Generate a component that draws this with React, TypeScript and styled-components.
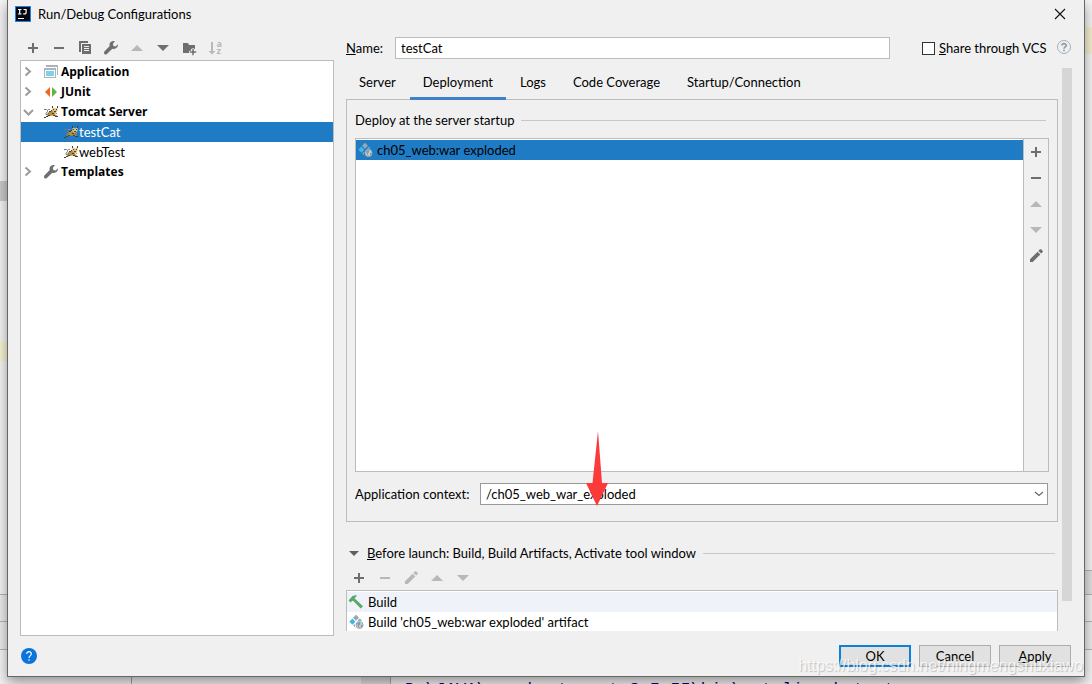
import React from 'react';
import styled, { createGlobalStyle, css } from 'styled-components';

const ink = '#6e6e6e';
const faint = '#b8b8b8';
const line = '#bcbcbc';
const blue = '#1f7bc3';

const GlobalStyle = createGlobalStyle`
  * { box-sizing: border-box; }
  body {
    margin: 0;
    background: #f0f0f0;
    color: #000;
    font: 13px/20px Lato, "Noto Sans", sans-serif;
  }
  button, input, select { font: inherit; color: inherit; }
`;

/* ---------- page behind the dialog ---------- */

const Page = styled.div`
  display: grid;
  grid-template-columns: 7px minmax(0, 1fr) 7px;
  grid-template-rows: minmax(0, 1fr) 7px;
  height: 100vh;
  min-height: 480px;
  overflow: hidden;
`;

const Strip = styled.div`
  display: flex;
  flex-direction: column;
  overflow: hidden;
`;

const Band = styled.div<{ $size?: number; $tone?: string; $ruled?: boolean }>`
  flex: ${p => (p.$size ? `0 0 ${p.$size}px` : '1')};
  background: ${p => p.$tone ?? '#f4f4f4'};
  border-top: ${p => (p.$ruled ? '1px solid #b4b4b4' : '0')};
`;

const Console = styled.div`
  grid-column: 1 / -1;
  display: flex;
  overflow: hidden;
  background: #f2f2f2;
`;

const ConsoleTree = styled.div`
  flex: 0 0 391px;
  display: flex;
  justify-content: flex-end;
  border-right: 1px solid #a8a8a8;
`;

const ConsoleTreeInner = styled.div`
  flex: 0 0 259px;
  border-left: 1px solid #a0a0a0;
  border-right: 29px solid #dedede;
`;

const ConsoleText = styled.code`
  padding: 3px 14px;
  color: #000080;
  font: 17px/20px "Liberation Mono", monospace;
  white-space: pre;
`;

/* ---------- dialog frame ---------- */

const Dialog = styled.main`
  position: relative;
  z-index: 1;
  display: flex;
  flex-direction: column;
  min-width: 0;
  background: #f0f0f0;
  border: 1px solid #666;
  border-top: 0;
  box-shadow: 0 5px 12px rgba(0, 0, 0, 0.4);
`;

const TitleBar = styled.header`
  display: flex;
  align-items: center;
  gap: 7px;
  height: 30px;
  padding: 0 16px 2px 7px;
`;

const Title = styled.h1`
  flex: 1;
  margin: 0;
  font-size: 13px;
  font-weight: 400;
`;

const IconButton = styled.button`
  display: flex;
  flex: none;
  padding: 0;
  border: 0;
  background: none;
`;

const Body = styled.div`
  flex: 1;
  display: flex;
  gap: 12px;
  min-height: 0;
  padding: 0 12px;
`;

const Footer = styled.footer`
  display: flex;
  align-items: center;
  gap: 8px;
  height: 40px;
  padding: 0 13px;
`;

const FooterSpace = styled.span`
  flex: 1;
`;

const PushButton = styled.button<{ $primary?: boolean }>`
  width: 72px;
  height: 22px;
  padding: 0;
  line-height: 18px;
  background: #e1e1e1;
  border: ${p => (p.$primary ? '2px solid #0f80d8' : '1px solid #adadad')};
`;

const Watermark = styled.div`
  position: absolute;
  right: 1px;
  bottom: 0;
  color: rgba(255, 255, 255, 0.75);
  font: 16px/20px "Liberation Sans", sans-serif;
  text-shadow: 1px 1px 1px rgba(0, 0, 0, 0.2);
  pointer-events: none;
`;

/* ---------- left column ---------- */

const Sidebar = styled.nav`
  flex: 0 0 314px;
  display: flex;
  flex-direction: column;
`;

const Toolbar = styled.div<{ $tall?: boolean }>`
  display: flex;
  gap: 10px;
  padding: ${p => (p.$tall ? '10px 5px 4px' : '7px 5px 4px')};
`;

const Tree = styled.ul`
  flex: 1;
  margin: 0;
  padding: 1px 0 0;
  list-style: none;
  background: #fff;
  border: 1px solid ${line};
`;

const TreeRow = styled.li<{ $child?: boolean; $selected?: boolean }>`
  display: flex;
  align-items: center;
  gap: 2px;
  height: 20px;
  ${p => p.$child
    ? css`padding-left: 42px; gap: 0; line-height: 18px;`
    : css`font-family: "Open Sans", sans-serif; font-size: 12px; font-weight: 700;`}
  ${p => p.$selected && css`background: ${blue}; color: #fff;`}
`;

const Twisty = styled.span`
  display: flex;
  width: 20px;
`;

/* ---------- right column ---------- */

const Settings = styled.section`
  flex: 1;
  display: flex;
  flex-direction: column;
  min-width: 0;
  padding: 7px 0 5px;
`;

const NameRow = styled.div`
  display: flex;
  align-items: center;
  height: 22px;
  margin-bottom: 9px;
`;

const FieldLabel = styled.label<{ $width: number }>`
  flex: 0 0 ${p => p.$width}px;
`;

const TextInput = styled.input`
  flex: 1;
  min-width: 0;
  height: 22px;
  padding: 0 5px;
  background: #fff;
  border: 1px solid ${line};
  outline: 0;
`;

const ShareGroup = styled.div`
  flex: 0 0 150px;
  display: flex;
  align-items: center;
  justify-content: space-between;
  margin-left: 32px;
`;

const ShareLabel = styled.label`
  display: flex;
  align-items: center;
  gap: 4px;
`;

const Checkbox = styled.input`
  appearance: none;
  width: 13px;
  height: 13px;
  margin: 0;
  background: #fff;
  border: 1px solid #333;
`;

const ScrollArea = styled.div`
  flex: 1;
  display: flex;
  gap: 4px;
  min-height: 0;
`;

const ScrollContent = styled.div`
  flex: 1;
  display: flex;
  flex-direction: column;
  min-width: 0;
`;

const ScrollThumb = styled.div`
  width: 10px;
  margin-bottom: 30px;
  background: #d6d6d6;
`;

const Tabs = styled.div`
  position: relative;
  display: flex;
  gap: 1px;
  height: 32px;
  margin-bottom: -1px;
`;

const Tab = styled.button<{ $active?: boolean }>`
  padding: 0 13px 1px;
  background: none;
  border: 0;
  border-bottom: 3px solid ${p => (p.$active ? '#4080c9' : 'transparent')};
`;

const Panel = styled.div`
  flex: 1;
  display: flex;
  flex-direction: column;
  min-height: 0;
  padding: 10px 8px 16px;
  border: 1px solid ${line};
`;

const SectionTitle = styled.h2`
  display: flex;
  align-items: center;
  gap: 7px;
  height: 20px;
  margin: 0;
  padding-right: 3px;
  font-size: 13px;
  font-weight: 400;
  &::after {
    content: "";
    flex: 1;
    border-top: 1px solid #c8c8c8;
  }
`;

const ArtifactBox = styled.div`
  flex: 1;
  display: flex;
  min-height: 0;
  margin: 8px 0 11px;
  border: 1px solid ${line};
`;

const List = styled.ul`
  flex: 1;
  margin: 0;
  padding: 1px 0 0;
  list-style: none;
  background: #fff;
`;

const ListRow = styled.li<{ $tone?: string }>`
  display: flex;
  align-items: center;
  gap: 4px;
  height: 20px;
  padding-left: 1px;
  background: ${p => p.$tone ?? '#fff'};
`;

const SideToolbar = styled.div`
  flex: 0 0 25px;
  display: flex;
  flex-direction: column;
  align-items: center;
  gap: 10px;
  padding-top: 5px;
  border-left: 1px solid ${line};
`;

const ContextRow = styled.div`
  display: flex;
  align-items: center;
  padding-right: 1px;
`;

const Combo = styled.div`
  position: relative;
  flex: 1;
  display: flex;
`;

const Select = styled.select`
  appearance: none;
  flex: 1;
  height: 22px;
  padding: 0 5px;
  background: #fff;
  border: 1px solid #999;
  border-radius: 0;
`;

const ComboChevron = styled.svg`
  position: absolute;
  top: 8px;
  right: 4px;
  pointer-events: none;
`;

const Pointer = styled.svg`
  position: absolute;
  left: 106px;
  bottom: -1px;
  pointer-events: none;
`;

const BeforeLaunch = styled.section`
  margin-top: 21px;
`;

const BeforeTitle = styled(SectionTitle)`
  &::before {
    content: "";
    margin: 0 1px 0 3px;
    border: 5px solid transparent;
    border-top-color: #5f5f5f;
    border-bottom: 0;
  }
`;

const TaskList = styled(List)`
  height: 41px;
  overflow: hidden;
  border: 1px solid ${line};
  border-bottom: 0;
`;

/* ---------- icons ---------- */

type IconName =
  | 'add' | 'remove' | 'copy' | 'wrench' | 'up' | 'down' | 'folder' | 'sort' | 'edit'
  | 'app' | 'junit' | 'tomcat' | 'artifact' | 'hammer' | 'help' | 'helpBlue' | 'logo' | 'close';

const shapes: Record<IconName, React.ReactNode> = {
  add: <path d="M3 7h4V3h2v4h4v2H9v4H7V9H3z" />,
  remove: <path d="M3 7h10v2H3z" />,
  copy: (
    <>
      <path d="M2 1h9v2H4v9H2z" />
      <path fillRule="evenodd" d="M5 4h9v10H5zM7 6v1h5V6zm0 2v1h5V8zm0 2v1h5v-1z" />
    </>
  ),
  wrench: <path d="M15 4.300 12.600 6.400 10.300 6 9.900 3.700 11.900 1.200C9.300.5 6.700 2 6.500 4.400q0 1 .2 1.700L1.400 11.400q-1 1.400 0 2.500 1.200 1 2.500 0L9.300 8.700C12.200 9.800 15.200 7.500 15 4.300z" />,
  up: <path d="M2 11 8 5l6 6z" />,
  down: <path d="M2 5h12l-6 6z" />,
  folder: (
    <>
      <path d="M2 3h5l1 2h6v4h-4v2H8v2H2z" />
      <path d="M11 8.500h2v2.500h2.500v2H13v2.500h-2V13H8.500v-2H11z" stroke="#f0f0f0" strokeWidth=".6" />
    </>
  ),
  sort: (
    <>
      <path d="M4 2h2v9h2.500L5 14.500 1.500 11H4z" />
      <text x="9.500" y="7" fontFamily="Noto Sans" fontSize="9" fontWeight="700">a</text>
      <text x="9.500" y="14" fontFamily="Noto Sans" fontSize="9" fontWeight="700">z</text>
    </>
  ),
  edit: (
    <>
      <path d="M9.600 3.700 12.300 6.400 4.700 14H2v-2.700z" />
      <path d="m10.400 2.900 1.300-1.300q.9-.8 1.800 0l.9.9q.8.9 0 1.800l-1.300 1.300z" />
    </>
  ),
  app: (
    <>
      <path fill="#a9b4bc" d="M3 1h12v10h-1V3H3z" />
      <path fill="#a9b4bc" d="M1 4h12v10H1z" />
      <path fill="#fff" d="M2 6h10v7H2z" />
      <path fill="#7fd0ee" d="M3 7h8v5H3z" />
    </>
  ),
  junit: (
    <>
      <path fill="#f26522" d="M7 3v10L2 8z" />
      <path fill="#62b543" d="M9 3v10l5-5z" />
    </>
  ),
  tomcat: (
    <>
      <path fill="#b98d35" d="M5 8.500 8 7l2-1 3.500 1-.5 2-1.500 1 2.500 1.500v1.500L10 11.500 6.500 12 4 13H2.500l2-2z" />
      <path fill="#dfc283" d="M9.500 3 11 4.300h2L14.500 3v4L12.700 8.500h-2L9.500 7z" />
      <path fill="#45402f" d="M9 2h1v2H9zM14 2h1v2h-1zM10 5h1v1h-1zM13 5h1v1h-1zM11 7h2v1h-2zM6 7h2v1H6zM8 6h1v1H8zM9 9h2v1H9zM12 12h3v1h-3zM10 11h2v1h-2zM5 11h2v1H5zM3 12h2v1H3zM1 13h2v1H1z" />
      <path fill="none" stroke="#70767a" d="M1 5.500h2.500Q5 6 4.500 7.500L3 9.500Q2.500 11 4 10.500L6 9" />
      <path fill="#8a8f91" d="M5 5h2v1H5zM7 9h1v2H7zM13 9h1v1h-1z" />
    </>
  ),
  artifact: (
    <>
      <path fill="#9aa7b0" d="M8 .700 11 3.700 8 6.700 5 3.700z" />
      <path fill="#40b6e0" d="M4.400 4.600 7.500 7.700 4.400 10.800 1.300 7.700z" />
      <path fill="#40b6e0" d="M11.800 4.600l2.200 2.200H9.600z" />
      <path fill="#9aa7b0" d="M7.200 9.300 5.300 11.500l2 2.300-.4-2.300z" />
      <circle cx="11.500" cy="11" r="3.500" fill="#d5dbdf" stroke="#9aa7b0" />
      <path fill="#8a98a2" d="M9 9l3-1 .5 2-1.500 1.500 1 2.500-2-1zM12.500 11l2-.5-.5 2.500-1 .5z" />
    </>
  ),
  hammer: <path fill="#59a869" d="M.500 6.500 4.500 2 8.500 1v1.300L6.500 4.200l.8.900L15 12.200 12.700 14.600 5.300 7.100 4.300 6.800 2.600 8.500z" />,
  help: (
    <>
      <circle cx="8" cy="7" r="6.500" fill="none" stroke="#9fb0ba" />
      <path fill="none" stroke="#8c9aa3" strokeWidth="1.700" d="M5.800 5.600c0-2.800 4.500-2.600 4.400 0C10.100 7 8 6.900 8 8.700M8 9.800v1.500" />
    </>
  ),
  helpBlue: (
    <>
      <circle cx="8" cy="8" r="8" fill="#0a74da" />
      <path fill="none" stroke="#fff" strokeWidth="1.200" d="M5.700 6c0-3.200 4.700-3 4.600 0C10.300 7.600 8 7.700 8 10M8 11.300v1.500" />
    </>
  ),
  logo: (
    <>
      <path fill="#1a82e8" d="M0 0h16v16H0z" />
      <path fill="#05090f" d="M1 1h14v14H1z" />
      <path fill="none" stroke="#fff" strokeWidth="1.200" d="M3 3.500h3.500M4.700 3v5M3 8h3.500M8.500 3.500h2.600V7q0 1.200-2.900.9" />
      <path fill="#fff" d="M3 12h6v1H3z" />
    </>
  ),
  close: <path fill="none" stroke="#111" strokeWidth="1.100" d="m3 3 10 10M13 3 3 13" />,
};

const Icon = ({ name, off }: { name: IconName; off?: boolean }) => (
  <svg width="16" height="16" viewBox="0 0 16 16" fill={off ? faint : ink} aria-hidden="true">
    {shapes[name]}
  </svg>
);

const Tool = ({ name, label, off }: { name: IconName; label: string; off?: boolean }) => (
  <IconButton type="button" aria-label={label} disabled={off}>
    <Icon name={name} off={off} />
  </IconButton>
);

const Arrow = ({ open }: { open?: boolean }) => (
  <Twisty>
    <svg width="14" height="14" viewBox="0 0 14 14" fill="none" stroke="#9c9c9c" strokeWidth="2" aria-hidden="true">
      <path d={open ? 'M3 5l4.500 4.500L12 5' : 'M4.500 2.500 9 6.500 4.500 10.500'} />
    </svg>
  </Twisty>
);

/* ---------- screen ---------- */

const tree: { label: string; icon: IconName; open?: boolean; child?: boolean; selected?: boolean }[] = [
  { label: 'Application', icon: 'app' },
  { label: 'JUnit', icon: 'junit' },
  { label: 'Tomcat Server', icon: 'tomcat', open: true },
  { label: 'testCat', icon: 'tomcat', child: true, selected: true },
  { label: 'webTest', icon: 'tomcat', child: true },
  { label: 'Templates', icon: 'wrench' },
];

const tabs = ['Server', 'Deployment', 'Logs', 'Code Coverage', 'Startup/Connection'];

export default function App() {
  return (
    <>
      <GlobalStyle />
      <Page>
        <Strip>
          <Band $size={181} />
          <Band $size={20} $tone="#cacaca" />
          <Band $size={140} />
          <Band $size={20} $tone="#f5f4d3" />
          <Band $size={233} />
          <Band $size={27} $tone="#ebebeb" $ruled />
          <Band $size={28} $tone="#ebebeb" $ruled />
          <Band $ruled />
        </Strip>
        <Dialog>
          <TitleBar>
            <Icon name="logo" />
            <Title>Run/Debug Configurations</Title>
            <Tool name="close" label="Close" />
          </TitleBar>
          <Body>
            <Sidebar aria-label="Configurations">
              <Toolbar $tall>
                <Tool name="add" label="Add" />
                <Tool name="remove" label="Remove" />
                <Tool name="copy" label="Copy" />
                <Tool name="wrench" label="Edit templates" />
                <Tool name="up" label="Move up" off />
                <Tool name="down" label="Move down" />
                <Tool name="folder" label="Create folder" />
                <Tool name="sort" label="Sort" off />
              </Toolbar>
              <Tree>
                {tree.map(item => (
                  <TreeRow key={item.label} $child={item.child} $selected={item.selected}>
                    {!item.child && <Arrow open={item.open} />}
                    <Icon name={item.icon} />
                    <span>{item.label}</span>
                  </TreeRow>
                ))}
              </Tree>
            </Sidebar>
            <Settings>
              <NameRow>
                <FieldLabel $width={49} htmlFor="name"><u>N</u>ame:</FieldLabel>
                <TextInput id="name" defaultValue="testCat" />
                <ShareGroup>
                  <ShareLabel>
                    <Checkbox type="checkbox" />
                    <span><u>S</u>hare through VCS</span>
                  </ShareLabel>
                  <Tool name="help" label="About sharing" />
                </ShareGroup>
              </NameRow>
              <ScrollArea>
                <ScrollContent>
                  <Tabs role="tablist">
                    {tabs.map(t => (
                      <Tab key={t} type="button" role="tab" aria-selected={t === 'Deployment'} $active={t === 'Deployment'}>
                        {t}
                      </Tab>
                    ))}
                  </Tabs>
                  <Panel role="tabpanel">
                    <SectionTitle>Deploy at the server startup</SectionTitle>
                    <ArtifactBox>
                      <List>
                        <ListRow $tone={blue}>
                          <Icon name="artifact" />
                          <span>ch05_web:war exploded</span>
                        </ListRow>
                      </List>
                      <SideToolbar>
                        <Tool name="add" label="Add artifact" />
                        <Tool name="remove" label="Remove artifact" />
                        <Tool name="up" label="Move artifact up" off />
                        <Tool name="down" label="Move artifact down" off />
                        <Tool name="edit" label="Edit artifact" />
                      </SideToolbar>
                    </ArtifactBox>
                    <ContextRow>
                      <FieldLabel $width={125} htmlFor="context">Application context:</FieldLabel>
                      <Combo>
                        <Select id="context">
                          <option>/ch05_web_war_exploded</option>
                        </Select>
                        <ComboChevron width="10" height="6" viewBox="0 0 10 6" fill="none" stroke="#666" strokeWidth="1.200">
                          <path d="M1 1l4 3.500L9 1" />
                        </ComboChevron>
                        <Pointer width="22" height="75" viewBox="0 0 22 75" fill="#fc3a3a">
                          <path d="M12 0 16 52H22L11 75 0 52h6.500z" />
                        </Pointer>
                      </Combo>
                    </ContextRow>
                  </Panel>
                  <BeforeLaunch>
                    <BeforeTitle>
                      <span><u>B</u>efore launch: Build, Build Artifacts, Activate tool window</span>
                    </BeforeTitle>
                    <Toolbar>
                      <Tool name="add" label="Add task" />
                      <Tool name="remove" label="Remove task" off />
                      <Tool name="edit" label="Edit task" off />
                      <Tool name="up" label="Move task up" off />
                      <Tool name="down" label="Move task down" off />
                    </Toolbar>
                    <TaskList>
                      <ListRow $tone="#eff3f9">
                        <Icon name="hammer" />
                        <span>Build</span>
                      </ListRow>
                      <ListRow>
                        <Icon name="artifact" />
                        <span>Build 'ch05_web:war exploded' artifact</span>
                      </ListRow>
                    </TaskList>
                  </BeforeLaunch>
                </ScrollContent>
                <ScrollThumb />
              </ScrollArea>
            </Settings>
          </Body>
          <Footer>
            <Tool name="helpBlue" label="Help" />
            <FooterSpace />
            <PushButton type="button" $primary>OK</PushButton>
            <PushButton type="button">Cancel</PushButton>
            <PushButton type="button"><u>A</u>pply</PushButton>
          </Footer>
          <Watermark>https://blog.csdn.net/ningmengshuxiawo</Watermark>
        </Dialog>
        <Strip>
          <Band $size={27} />
          <Band $size={27} $tone="#f5efd0" />
          <Band $size={516} />
          <Band $size={24} $tone="#e0e0e0" $ruled />
          <Band $size={27} $tone="#f0f0f0" $ruled />
          <Band $size={28} $tone="#ebebeb" $ruled />
          <Band $ruled />
        </Strip>
        <Console>
          <ConsoleTree><ConsoleTreeInner /></ConsoleTree>
          <ConsoleText>D:\JAVA\apache-tomcat-8.5.55\bin\catalina.bat stop</ConsoleText>
        </Console>
      </Page>
    </>
  );
}
